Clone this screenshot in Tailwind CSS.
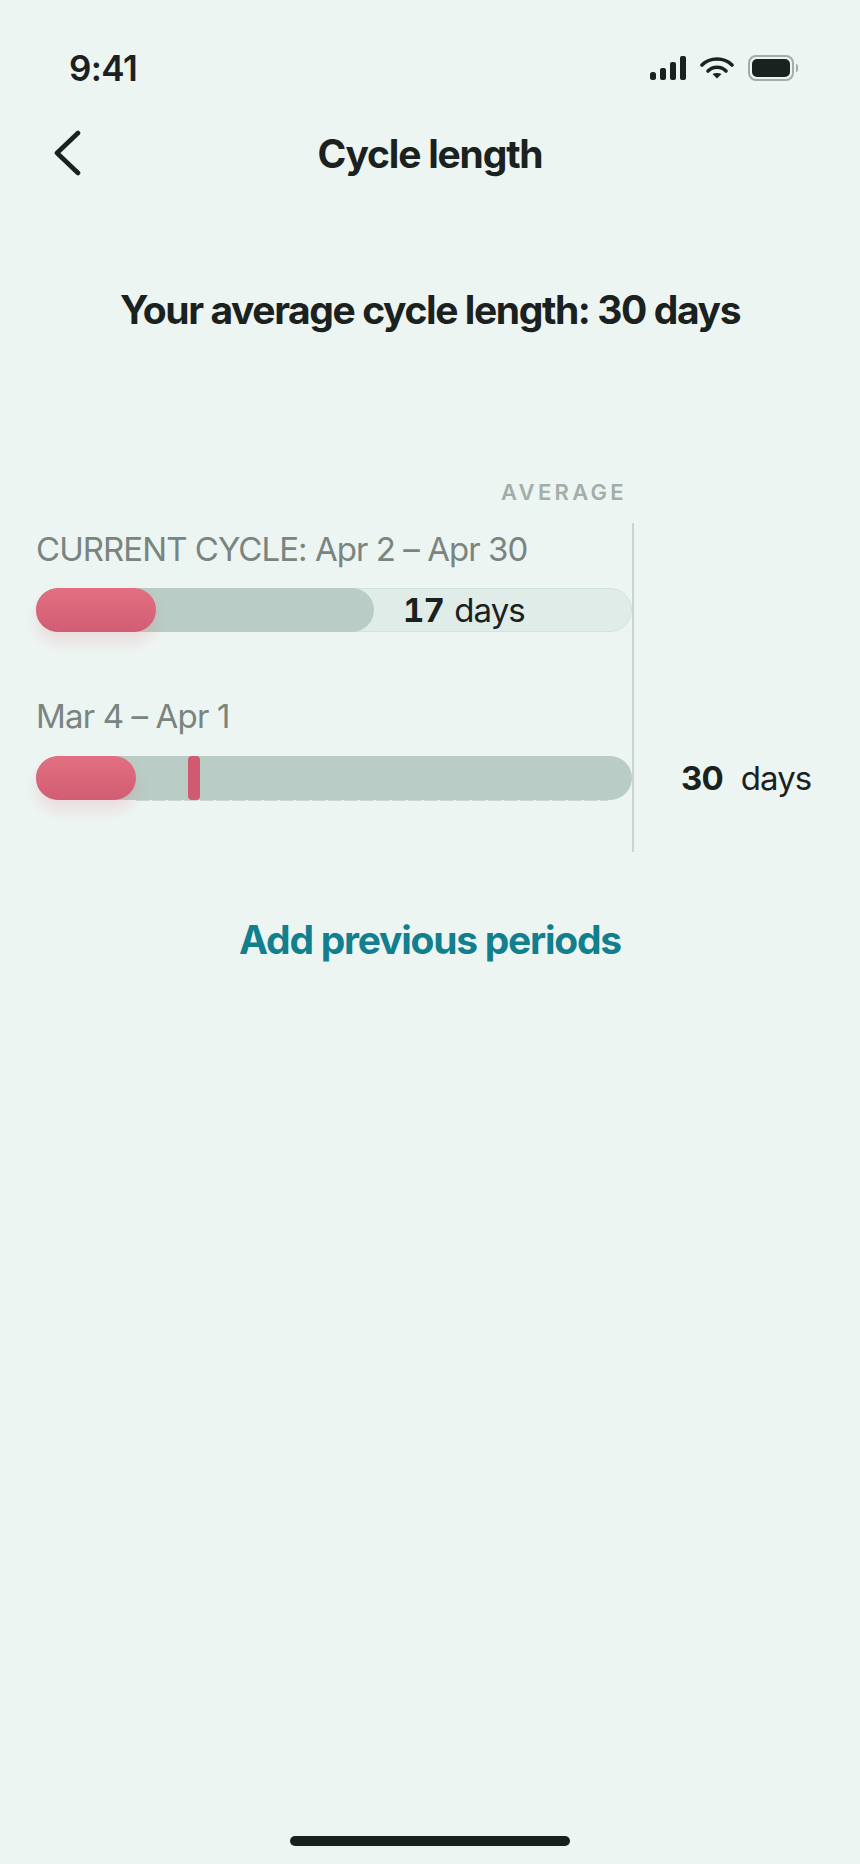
<!DOCTYPE html>
<html lang="en">
<head>
    <meta charset="UTF-8">
    <meta name="viewport" content="width=device-width, initial-scale=1.0">
    <title>Cycle length</title>
    <script src="https://cdn.jsdelivr.net/npm/@tailwindcss/browser@4"></script>
</head>
<body class="bg-[#edf5f2]">
    <div class="relative w-[860px] h-[1864px] overflow-hidden bg-[#edf5f2] text-[#1a211f] font-['Inter',sans-serif]">
        <!-- status bar -->
        <div class="flex items-center justify-between h-[28px] mt-[54px] pl-[69px] pr-[62px]">
            <span class="text-[35px] leading-[28px] font-semibold tracking-[-0.6px]">9:41</span>
            <div class="flex items-center gap-[14px]">
                <svg width="36" height="24" viewBox="0 0 36 24" fill="#1a211f">
                    <rect x="0" y="16" width="6" height="8" rx="2.5"/>
                    <rect x="10" y="12" width="6" height="12" rx="2"/>
                    <rect x="20" y="6" width="6" height="18" rx="2"/>
                    <rect x="30" y="0" width="6" height="24" rx="2"/>
                </svg>
                <svg width="34" height="22" viewBox="0 0 34 22" fill="none" stroke="#1a211f" stroke-width="3.6" stroke-linecap="round">
                    <path d="M2 8 C10 0 24 0 32 8"/>
                    <path d="M8 14 C13 9 21 9 26 14"/>
                    <path d="M17 21.5 L12.5 17 C15 15.5 19 15.5 21.5 17 Z" fill="#1a211f" stroke="none"/>
                </svg>
                <div class="flex items-center gap-[2px]">
                    <div class="w-[46px] h-[26px] rounded-[8px] border-2 border-[#a4aba8] p-[2px]">
                        <div class="w-full h-full rounded-[5px] bg-[#1a211f]"></div>
                    </div>
                    <div class="w-[2px] h-[8px] rounded-r-full bg-[#a4aba8]"></div>
                </div>
            </div>
        </div>

        <!-- nav -->
        <div class="relative h-[44px] mt-[50px]">
            <svg class="absolute left-[53px] top-[-2px]" width="28" height="46" viewBox="0 0 28 46" fill="none" stroke="#1a211f" stroke-width="4.6" stroke-linecap="round" stroke-linejoin="round">
                <path d="M25 3 L4 23 L25 43"/>
            </svg>
            <h1 class="text-center text-[39px] leading-[44px] font-bold tracking-[-1.2px]">Cycle length</h1>
        </div>

        <!-- summary -->
        <h2 class="mt-[112px] text-center text-[39px] leading-[44px] font-bold tracking-[-1.4px]">Your average cycle length: 30 days</h2>

        <!-- chart -->
        <div class="mt-[147px] pl-[36px]">
            <div class="w-[591px] text-right text-[22px] leading-[26px] font-semibold tracking-[3.3px] text-[#a3adaa]">AVERAGE</div>
            <div class="flex mt-[18px]">
                <div class="w-[598px] h-[329px] border-r-2 border-[#c9d3cf]">
                    <p class="mt-[7px] text-[33px] leading-[38px] text-[#7a8480] tracking-[-0.95px]">CURRENT CYCLE: Apr 2 – Apr 30</p>
                    <div class="relative flex items-center h-[44px] w-[596px] mt-[20px] rounded-full bg-[#dfece7] border border-[#d5e3dd]">
                        <div class="absolute left-[-1px] top-[-1px] w-[338px] h-[44px] rounded-full bg-[#b9ccc5]"></div>
                        <div class="absolute left-[-1px] top-[-1px] w-[120px] h-[44px] rounded-full bg-linear-to-b from-[#e36f81] to-[#d05d73] shadow-[0_10px_14px_rgba(225,110,125,0.18)]"></div>
                        <span class="absolute left-[366px] text-[33px] leading-[42px] tracking-[-0.9px]"><b class="font-bold tabular-nums">17</b> <span class="ml-[2px]">days</span></span>
                    </div>
                    <p class="mt-[65px] text-[33px] leading-[38px] text-[#7a8480] tracking-[-0.85px]">Mar 4 – Apr 1</p>
                    <div class="relative h-[44px] w-[596px] mt-[21px] rounded-full bg-[#b9ccc5]">
                        <div class="absolute left-[100px] right-[24px] bottom-[-1px] h-[1px] bg-[repeating-linear-gradient(90deg,#c8d7d1_0_14px,transparent_14px_16px)]"></div>
                        <div class="absolute left-0 top-0 w-[100px] h-[44px] rounded-full bg-linear-to-b from-[#e36f81] to-[#d05d73] shadow-[0_10px_14px_rgba(225,110,125,0.18)]"></div>
                        <div class="absolute left-[152px] top-0 w-[12px] h-[44px] rounded-[4px] bg-[#d05a70]"></div>
                    </div>
                </div>
                <div class="pl-[47px] pt-[236px] text-[33px] leading-[38px] tracking-[-0.9px] whitespace-nowrap">
                    <b class="font-bold">30</b><span class="ml-[18px]">days</span>
                </div>
            </div>
        </div>

        <!-- add periods -->
        <p class="mt-[66px] text-center text-[39px] leading-[44px] font-bold tracking-[-1.25px] text-[#127f8e]">Add previous periods</p>

        <!-- home indicator -->
        <div class="absolute left-[290px] bottom-[18px] w-[280px] h-[10px] rounded-full bg-[#17201c]"></div>
    </div>
</body>
</html>
